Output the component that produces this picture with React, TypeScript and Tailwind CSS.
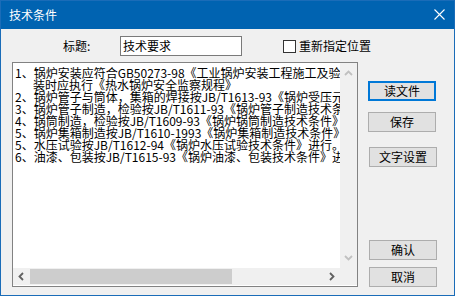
import React from 'react'

const lines: { text: string; indent?: boolean }[] = [
  { text: '1、锅炉安装应符合GB50273-98《工业锅炉安装工程施工及验收规范》' },
  { text: '装时应执行《热水锅炉安全监察规程》', indent: true },
  { text: '2、锅炉管子与筒体，集箱的焊接按JB/T1613-93《锅炉受压元件焊接技术条件》' },
  { text: '3、锅炉管子制造，检验按JB/T1611-93《锅炉管子制造技术条件》' },
  { text: '4、锅筒制造，检验按JB/T1609-93《锅炉锅筒制造技术条件》' },
  { text: '5、锅炉集箱制造按JB/T1610-1993《锅炉集箱制造技术条件》' },
  { text: '5、水压试验按JB/T1612-94《锅炉水压试验技术条件》进行。' },
  { text: '6、油漆、包装按JB/T1615-93《锅炉油漆、包装技术条件》进行。' },
]

function Chevron({ dir, color }: { dir: 'up' | 'down' | 'left' | 'right'; color: string }) {
  const d = {
    up: 'M1 6 L4.5 2.5 L8 6',
    down: 'M1 3 L4.5 6.5 L8 3',
    left: 'M6 1 L2.5 4.5 L6 8',
    right: 'M3 1 L6.5 4.5 L3 8',
  }[dir]
  return (
    <svg width="9" height="9" viewBox="0 0 9 9">
      <path d={d} fill="none" stroke={color} strokeWidth="1.8" />
    </svg>
  )
}

function DlgButton({ label, focused }: { label: string; focused?: boolean }) {
  return (
    <button
      className={
        'w-[68px] h-[20px] bg-[#e1e1e1] text-[12px] leading-none text-black flex items-center justify-center ' +
        (focused ? 'border-2 border-[#0078d7]' : 'border border-[#adadad]')
      }
    >
      {label}
    </button>
  )
}

export default function App() {
  return (
    <div className="w-[455px] h-[296px] bg-[#f0f0f0] border border-[#1a6cb8] flex flex-col font-['Noto_Sans_CJK_SC',sans-serif] overflow-hidden">
      {/* Title bar */}
      <div className="h-[29px] -mt-px -mx-px bg-[#0063b1] flex items-center justify-between pl-[9px] pr-[10px] shrink-0">
        <span className="text-white text-[12px] leading-none">技术条件</span>
        <svg width="11" height="11" viewBox="0 0 11 11">
          <path d="M0.5 0.5 L10.5 10.5 M10.5 0.5 L0.5 10.5" stroke="#fff" strokeWidth="1.1" />
        </svg>
      </div>

      {/* Title row */}
      <div className="flex items-center h-[20px] mt-[7px] pl-[11px]">
        <div className="w-[108px] pl-[51px] text-[12px] text-black leading-none">标题:</div>
        <div className="w-[122px] h-[20px] border border-[#7a7a7a] bg-white flex items-center pl-[2px] text-[12px] text-black leading-none">
          技术要求
        </div>
        <div className="ml-[41px] flex items-center">
          <div className="w-[13px] h-[13px] border border-[#333333] bg-white" />
          <span className="ml-[3px] text-[12px] text-black leading-none">重新指定位置</span>
        </div>
      </div>

      {/* Body */}
      <div className="flex mt-[6px] pl-[11px]">
        <div className="w-[346px] h-[225px] border border-[#828282] bg-white flex flex-col">
          <div className="flex flex-1 min-h-0">
            <div className="flex-1 overflow-hidden pt-[4px] pl-[2px]">
              {lines.map((l, i) => (
                <div
                  key={i}
                  className={'whitespace-nowrap text-[12px] leading-[12px] text-black ' + (l.indent ? 'pl-[18px]' : '')}
                >
                  {l.text}
                </div>
              ))}
            </div>
            <div className="w-[17px] bg-[#f0f0f0] flex flex-col items-center justify-between py-[6px]">
              <Chevron dir="up" color="#c0c0c0" />
              <Chevron dir="down" color="#c0c0c0" />
            </div>
          </div>
          <div className="flex h-[18px] pb-px">
            <div className="flex-1 bg-[#f0f0f0] flex items-center">
              <div className="w-[17px] flex justify-center">
                <Chevron dir="left" color="#606060" />
              </div>
              <div className="w-[202px] h-[15px] bg-[#cdcdcd]" />
              <div className="flex-1" />
              <div className="w-[17px] flex justify-center">
                <Chevron dir="right" color="#606060" />
              </div>
            </div>
            <div className="w-[17px] bg-[#f0f0f0]" />
          </div>
        </div>

        <div className="flex flex-col ml-[10px]">
          <div className="mt-[19px]">
            <DlgButton label="读文件" focused />
          </div>
          <div className="mt-[11px]">
            <DlgButton label="保存" />
          </div>
          <div className="mt-[15px] ml-px">
            <DlgButton label="文字设置" />
          </div>
          <div className="mt-[73px] ml-px">
            <DlgButton label="确认" />
          </div>
          <div className="mt-[7px] ml-px">
            <DlgButton label="取消" />
          </div>
        </div>
      </div>
    </div>
  )
}
